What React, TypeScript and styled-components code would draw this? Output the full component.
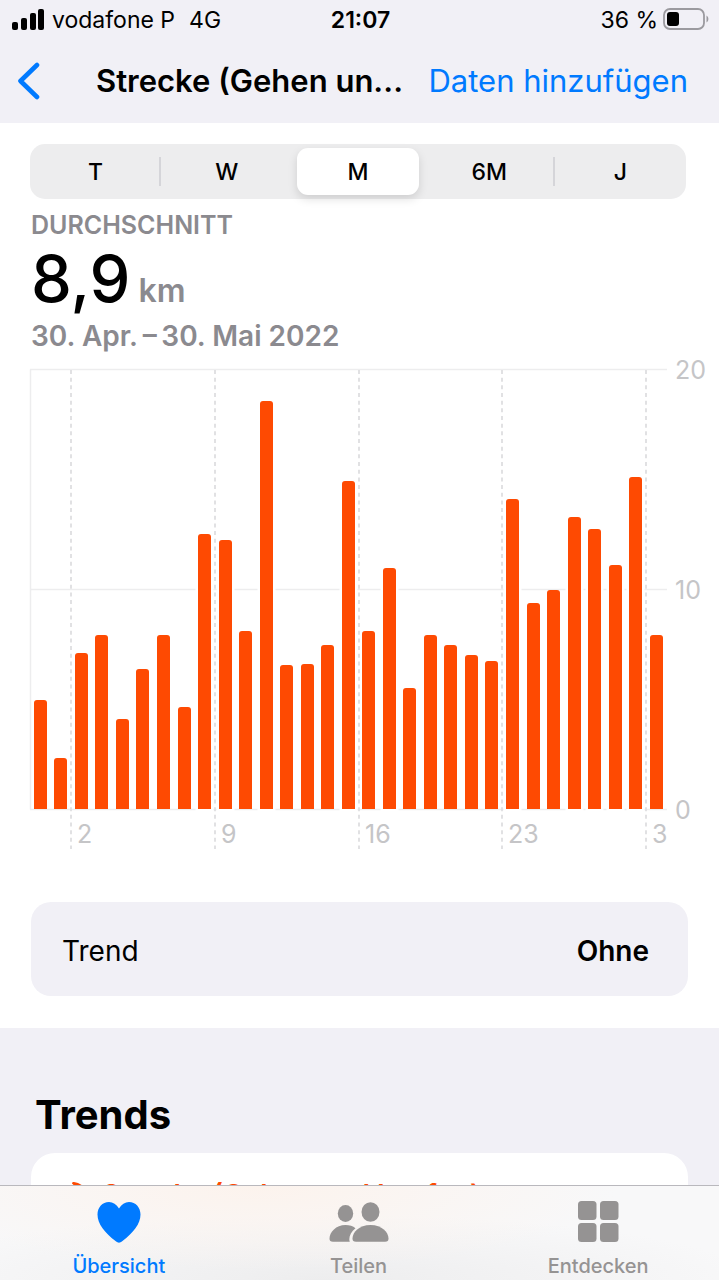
import React, { useState } from "react";
import styled, { createGlobalStyle } from "styled-components";

const GlobalStyle = createGlobalStyle`
  *, *::before, *::after { box-sizing: border-box; }
  body {
    margin: 0;
    background: #f1f0f6;
    color: #000;
    font-family: Inter, "Liberation Sans", sans-serif;
  }
  h1, h2, h3, p { margin: 0; }
  button { font: inherit; color: inherit; border: 0; padding: 0; background: none; cursor: pointer; }
  a { color: inherit; text-decoration: none; }
`;

const Screen = styled.div`
  display: flex;
  flex-direction: column;
  height: 100vh;
`;

const StatusBar = styled.div`
  display: grid;
  grid-template-columns: 1fr auto 1fr;
  align-items: center;
  height: 40px;
  padding: 0 10px 0 12px;
  font-size: 23px;
  line-height: 28px;
`;

const StatusGroup = styled.div<{ $end?: boolean }>`
  display: flex;
  align-items: center;
  justify-content: ${(p) => (p.$end ? "flex-end" : "flex-start")};
  gap: ${(p) => (p.$end ? 5 : 7)}px;
  white-space: nowrap;
`;

const Network = styled.span`
  padding-left: 7px;
`;

const Clock = styled.time`
  font-weight: 600;
`;

const NavBar = styled.header`
  display: flex;
  align-items: center;
  height: 83px;
  padding: 0 31px 2px 16px;
  font-size: 31px;
  line-height: 40px;
`;

const BackButton = styled.button`
  display: flex;
  flex: none;
  width: 80px;
  color: #007aff;
`;

const NavTitle = styled.h1`
  flex: none;
  font-size: 31px;
  font-weight: 600;
  white-space: nowrap;
`;

const AddButton = styled.button`
  flex: none;
  margin-left: auto;
  color: #007aff;
  white-space: nowrap;
`;

const Content = styled.main`
  flex: 1;
  min-height: 0;
  overflow-y: auto;
  scrollbar-width: none;
`;

const Panel = styled.section`
  padding: 21px 0 32px;
  background: #fff;
`;

const Segmented = styled.div`
  display: grid;
  grid-template-columns: repeat(5, 1fr);
  height: 55px;
  margin: 0 33px 0 30px;
  padding: 4px 0;
  border-radius: 15px;
  background: #ededee;
`;

const Segment = styled.button<{ $active: boolean; $divided: boolean }>`
  position: relative;
  margin: ${(p) => (p.$active ? "0 5px" : "0")};
  border-radius: 11px;
  font-size: 23px;
  font-weight: 500;
  background: ${(p) => (p.$active ? "#fff" : "transparent")};
  box-shadow: ${(p) => (p.$active ? "0 4px 10px rgba(0, 0, 0, 0.13)" : "none")};

  &::after {
    content: "";
    display: ${(p) => (p.$divided ? "block" : "none")};
    position: absolute;
    top: 9px;
    bottom: 9px;
    right: 0;
    width: 2px;
    background: #d5d5d9;
  }
`;

const Summary = styled.div`
  display: flex;
  flex-direction: column;
  margin: 0 31px;
  padding-top: 11px;
  color: #8b8a8f;
`;

const SummaryLabel = styled.h2`
  font-size: 25px;
  line-height: 30px;
  font-weight: 600;
`;

const SummaryValue = styled.p`
  display: flex;
  align-items: baseline;
  gap: 8px;
  font-size: 32px;
  line-height: 40px;
  font-weight: 600;
`;

const Amount = styled.strong`
  color: #000;
  font-size: 65px;
  line-height: 78px;
  font-weight: 500;
`;

const SummaryRange = styled.p`
  font-size: 28px;
  line-height: 36px;
  font-weight: 600;
`;

const ChartSvg = styled.svg`
  display: block;
  width: 100%;
  height: auto;
  font-size: 25px;
  fill: #c5c5c7;
`;

const TrendRow = styled.button`
  display: flex;
  align-items: center;
  justify-content: space-between;
  width: calc(100% - 62px);
  height: 94px;
  margin: 51px 31px 0;
  padding: 3px 39px 0 31px;
  border-radius: 20px;
  background: #f1f0f6;
  font-size: 28px;
  line-height: 36px;
`;

const TrendValue = styled.span`
  font-weight: 600;
`;

const Trends = styled.section`
  padding: 62px 31px 40px;
`;

const TrendsTitle = styled.h2`
  margin-left: 4px;
  font-size: 40px;
  line-height: 50px;
  font-weight: 700;
`;

const TrendCard = styled.article`
  display: flex;
  align-items: flex-start;
  gap: 8px;
  min-height: 180px;
  margin-top: 13px;
  padding: 26px 32px;
  border-radius: 24px;
  background: #fff;
  color: #fe4a02;
`;

const TrendCardTitle = styled.h3`
  font-size: 28px;
  line-height: 32px;
  font-weight: 600;
`;

const TabBar = styled.nav`
  display: flex;
  flex: none;
  height: 95px;
  border-top: 1px solid #b9b8bd;
  background:
    radial-gradient(ellipse 50% 90% at 36% 0, #fcf3ed, rgba(252, 243, 237, 0)),
    radial-gradient(ellipse 60% 70% at 45% 100%, #ededee, rgba(237, 237, 238, 0)),
    #f8f8f9;
`;

const Tab = styled.a<{ $active?: boolean }>`
  display: flex;
  flex: 1;
  flex-direction: column;
  align-items: center;
  gap: 10px;
  padding: 14px 2px 0 0;
  color: ${(p) => (p.$active ? "#007aff" : "#959393")};
  font-size: 20px;
  line-height: 24px;
  font-weight: 500;
`;

const ranges = ["T", "W", "M", "6M", "J"];

const distances = [
  4.97, 2.32, 7.08, 7.91, 4.09, 6.36, 7.91, 4.62, 12.49, 12.21, 8.1, 18.55, 6.55, 6.59, 7.45, 14.92,
  8.1, 10.94, 5.49, 7.91, 7.45, 6.98, 6.71, 14.09, 9.36, 9.95, 13.26, 12.73, 11.09, 15.09, 7.91,
];

const weeks = [
  { x: 71, label: "2" },
  { x: 215, label: "9" },
  { x: 359, label: "16" },
  { x: 502, label: "23" },
  { x: 646, label: "3" },
];

const BASE = 449;
const UNIT = 22;

function barPath(x: number, top: number) {
  return `M${x} ${BASE}V${top + 3}q0-3 3-3h7q3 0 3 3V${BASE}z`;
}

function DistanceChart() {
  return (
    <ChartSvg viewBox="0 -6 719 497" role="img" aria-label="Strecke pro Tag in Kilometern">
      <g stroke="#ededee" strokeWidth="1.5" fill="none">
        <path d="M30.5 449.5V9.5M30 9.5H667M30 229.5H667M30 449.5H667" />
      </g>
      {[20, 10, 0].map((v) => (
        <text key={v} x="675" y={BASE - v * UNIT + 10}>
          {v}
        </text>
      ))}
      {distances.map((km, i) => {
        const path = barPath(Math.round(33.8 + i * 20.53), BASE - Math.round(km * UNIT));
        return (
          <g key={i}>
            {km > 10 && <path d={path} stroke="#fff" strokeWidth="5" />}
            <path d={path} fill="#fe4a02" />
          </g>
        );
      })}
      {weeks.map((w) => (
        <g key={w.label}>
          <path d={`M${w.x} 10V489`} stroke="#dedee0" strokeWidth="1.8" strokeDasharray="4 3.67" />
          <text x={w.x + 6} y="483">
            {w.label}
          </text>
        </g>
      ))}
    </ChartSvg>
  );
}

function SignalIcon() {
  return (
    <svg width="33" height="24" viewBox="0 0 33 24" aria-hidden="true">
      <rect x="0" y="14" width="6" height="8" rx="2" />
      <rect x="9" y="10" width="6" height="12" rx="2" />
      <rect x="18" y="5" width="6" height="17" rx="2" />
      <rect x="26" y="1" width="6" height="21" rx="2" />
    </svg>
  );
}

function BatteryIcon() {
  return (
    <svg width="46" height="24" viewBox="0 0 46 24" aria-hidden="true">
      <rect x="1" y="1" width="40" height="20" rx="6" fill="none" stroke="#9b9a9f" strokeWidth="1.8" />
      <rect x="4" y="4" width="12" height="14" rx="3" />
      <path d="M43.500 7.500c2.500 1.500 2.500 5.500 0 7z" fill="#9b9a9f" />
    </svg>
  );
}

function BackIcon() {
  return (
    <svg width="24" height="38" viewBox="0 0 24 38" aria-hidden="true">
      <path
        d="M21 3L4.500 19 21 35"
        fill="none"
        stroke="currentColor"
        strokeWidth="4.600"
        strokeLinecap="round"
        strokeLinejoin="round"
      />
    </svg>
  );
}

function FlameIcon() {
  return (
    <svg width="31" height="36" viewBox="0 0 31 36" fill="currentColor" aria-hidden="true">
      <path d="M9 4.500c0-1.200 1-1.700 2-1.500C20 4.500 27 12 27 21.500 27 29 22 34 15 34S3 29.500 3 23c0-4 2-8 5-10.500 1 2 2 3 3.500 3.500C14 12 13 8 9 4.500z" />
    </svg>
  );
}

function HeartIcon() {
  return (
    <svg width="44" height="44" viewBox="0 0 44 44" fill="currentColor" aria-hidden="true">
      <path d="M22 8.500C24.500 4.300 28 2 32 2c6.500 0 11.500 5.300 11.500 12.500 0 9.500-7.500 18.500-18 26.500-1.500 1.100-2.500 1.700-3.500 1.700s-2-.6-3.500-1.700C8 33 .5 24 .5 14.500.5 7.300 5.500 2 12 2c4 0 7.500 2.300 10 6.500z" />
    </svg>
  );
}

function PeopleIcon() {
  return (
    <svg width="60" height="44" viewBox="0 0 60 44" fill="currentColor" aria-hidden="true">
      <ellipse cx="16.500" cy="13.500" rx="7.700" ry="8.500" />
      <path d="M16.500 25c4 0 7.500 1.200 10 3.200-4 3.300-6.200 7.200-6.200 11 0 1 .2 1.800.5 2.500H4c-2.500 0-3.500-1-3.500-3 0-6.500 6.500-13.700 16-13.700z" />
      <ellipse cx="41.500" cy="12" rx="9" ry="9.800" />
      <path d="M41.500 25C53 25 59.500 32.500 59.500 38.500c0 2.200-1 3.200-3.500 3.200H27c-2.500 0-3.500-1-3.500-3.200C23.500 32.500 30 25 41.500 25z" />
    </svg>
  );
}

function GridIcon() {
  return (
    <svg width="42" height="44" viewBox="0 0 42 44" fill="currentColor" aria-hidden="true">
      <rect x="1" y="1" width="18.500" height="19" rx="3.500" />
      <rect x="23" y="1" width="18.500" height="19" rx="3.500" />
      <rect x="1" y="23" width="18.500" height="19" rx="3.500" />
      <rect x="23" y="23" width="18.500" height="19" rx="3.500" />
    </svg>
  );
}

export default function App() {
  const [range, setRange] = useState("M");
  const activeIndex = ranges.indexOf(range);

  return (
    <Screen>
      <GlobalStyle />
      <StatusBar>
        <StatusGroup>
          <SignalIcon />
          <span>vodafone P</span>
          <Network>4G</Network>
        </StatusGroup>
        <Clock>21:07</Clock>
        <StatusGroup $end>
          <span>36 %</span>
          <BatteryIcon />
        </StatusGroup>
      </StatusBar>
      <NavBar>
        <BackButton aria-label="Zurück">
          <BackIcon />
        </BackButton>
        <NavTitle>Strecke (Gehen un...</NavTitle>
        <AddButton>Daten hinzufügen</AddButton>
      </NavBar>
      <Content>
        <Panel>
          <Segmented role="group" aria-label="Zeitraum">
            {ranges.map((r, i) => (
              <Segment
                key={r}
                $active={r === range}
                $divided={i < ranges.length - 1 && i !== activeIndex && i + 1 !== activeIndex}
                aria-pressed={r === range}
                onClick={() => setRange(r)}
              >
                {r}
              </Segment>
            ))}
          </Segmented>
          <Summary>
            <SummaryLabel>DURCHSCHNITT</SummaryLabel>
            <SummaryValue>
              <Amount>8,9</Amount>
              <span>km</span>
            </SummaryValue>
            <SummaryRange>30. Apr.{"\u2009"}–{"\u2009"}30. Mai 2022</SummaryRange>
          </Summary>
          <DistanceChart />
          <TrendRow>
            <span>Trend</span>
            <TrendValue>Ohne</TrendValue>
          </TrendRow>
        </Panel>
        <Trends>
          <TrendsTitle>Trends</TrendsTitle>
          <TrendCard>
            <FlameIcon />
            <TrendCardTitle>Strecke (Gehen und Laufen)</TrendCardTitle>
          </TrendCard>
        </Trends>
      </Content>
      <TabBar>
        <Tab href="#uebersicht" $active>
          <HeartIcon />
          Übersicht
        </Tab>
        <Tab href="#teilen">
          <PeopleIcon />
          Teilen
        </Tab>
        <Tab href="#entdecken">
          <GridIcon />
          Entdecken
        </Tab>
      </TabBar>
    </Screen>
  );
}
